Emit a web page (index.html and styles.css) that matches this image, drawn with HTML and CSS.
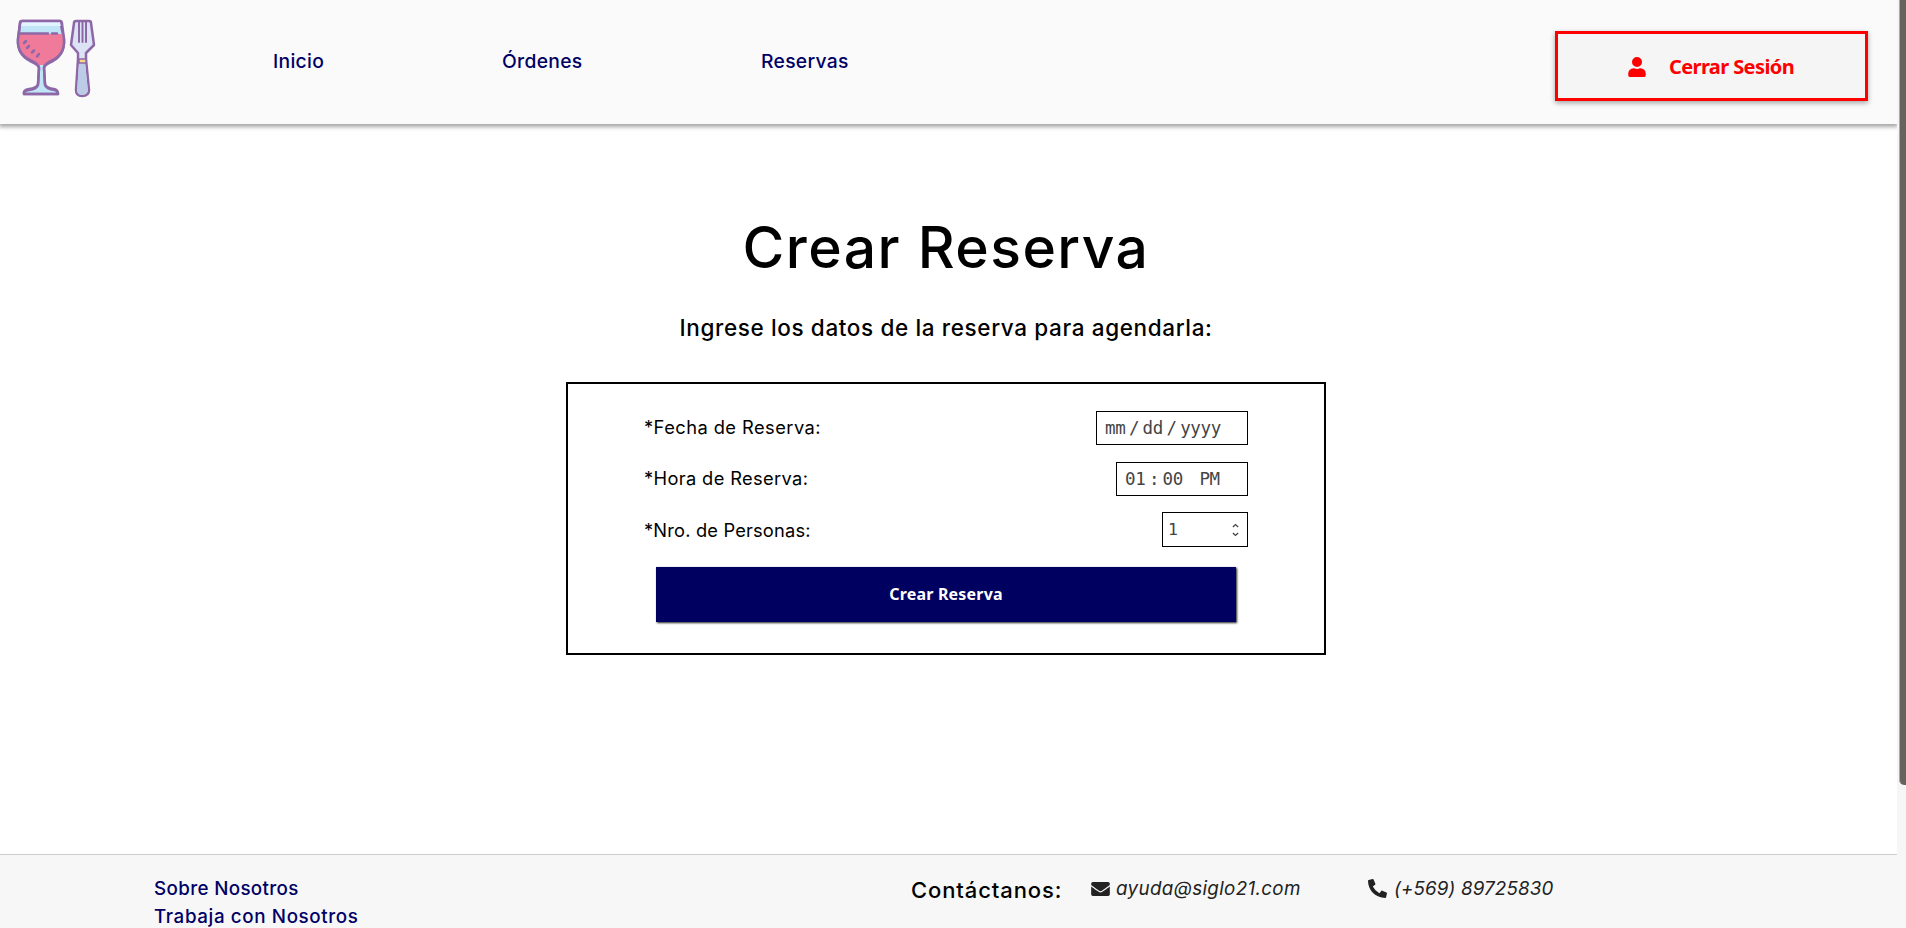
FILE: index.html
```html
<!DOCTYPE html>
<html lang="es">
<head>
<meta charset="utf-8">
<title>Crear Reserva</title>
<link rel="stylesheet" href="styles.css">
</head>
<body>
<div class="page">
  <header class="header">
    <svg class="logo" viewBox="0 0 120 124" fill="none" stroke="#8e68a6" stroke-width="2.5" stroke-linejoin="round" stroke-linecap="round">
      <path d="M22 21H60L64 39Q65 54 53 61Q44 65 44 68L45 85Q46 89 55 90Q58 91 58 94H24Q23 91 29 90Q37 89 38 85L39 68Q39 65 30 61Q17 54 18 39L20 23Q20 21 22 21Z" fill="#bfe5f7"/>
      <path d="M22 22H60L61 26H21Z" fill="#e2f4ff" stroke="none"/>
      <path d="M19 34H63Q66 51 53 60L44 65H39L30 60Q17 53 19 34Z" fill="#f07a9a" stroke="none"/>
      <path d="M22 21H60Q62 21 62 24L64 39Q65 54 53 60Q44 64 44 68L45 84Q46 88 54 89Q58 90 58 94H24Q23 90 29 89Q37 88 38 84L39 68Q39 64 30 60Q17 54 18 39L20 24Q20 21 22 21ZM20 33.500H48M52 33.500H57"/>
      <path d="M24 43L26 41M27 48L29 46M32 52.500L34 50.500M37 56.500L39 54"/>
      <path d="M76 21H89Q91 21 91 23L94 45L86 53V59L89 90Q89 96 82 96Q76 96 76 90L78 59V53L71 45L74 23Q74 21 76 21Z" fill="#dbe3f4"/>
      <path d="M79 63H85L88 91Q86 95 82 95Q78 95 77 91Z" fill="#bccbe6" stroke="none"/>
      <path d="M79 22V42M86 22V42M82.500 22V42" stroke-width="2"/>
      <path d="M79 59H86V63H79Z" fill="#f9d58b" stroke-width="1.500"/>
    </svg>
    <nav class="nav">
      <a class="nav-home">Inicio</a>
      <a class="nav-orders">Órdenes</a>
      <a class="nav-bookings">Reservas</a>
    </nav>
    <button class="logout">
      <svg class="user" viewBox="0 0 448 512" fill="currentColor"><path d="M224 256A128 128 0 1 0 224 0a128 128 0 0 0 0 256zm89.600 32h-16.700a174 174 0 0 1-145.800 0h-16.700A134.400 134.400 0 0 0 0 422.400V464a48 48 0 0 0 48 48h352a48 48 0 0 0 48-48v-41.600A134.400 134.400 0 0 0 313.600 288z"/></svg>
      <span>Cerrar Sesión</span>
    </button>
  </header>
  <main class="main">
    <h1 class="title">Crear Reserva</h1>
    <p class="subtitle">Ingrese los datos de la reserva para agendarla:</p>
    <form class="form">
      <div class="row"><label class="label-date">*Fecha de Reserva:</label>
        <div class="field date"><span>mm</span><span>/</span><span>dd</span><span>/</span><span>yyyy</span></div></div>
      <div class="row"><label class="label-time">*Hora de Reserva:</label>
        <div class="field time"><span>01</span><span>:</span><span>00</span><span class="pm">PM</span></div></div>
      <div class="row last"><label class="label-people">*Nro. de Personas:</label>
        <div class="field number"><span>1</span>
          <svg class="spin" viewBox="0 0 8 16" fill="none" stroke="#444" stroke-width="1.500"><path d="M1 4.500L4 1.800L7 4.500M1 11.500L4 14.200L7 11.500"/></svg></div></div>
      <button class="submit" type="button">Crear Reserva</button>
    </form>
  </main>
  <footer class="footer">
    <div class="links"><a class="link-about">Sobre Nosotros</a><a class="link-jobs">Trabaja con Nosotros</a></div>
    <div class="contact">Contáctanos:</div>
    <address class="mail">
      <svg class="envelope" viewBox="0 0 512 384" fill="currentColor"><path d="M502 127c4-3 10 0 10 5v204a48 48 0 0 1-48 48H48a48 48 0 0 1-48-48V132c0-5 6-8 10-5 22 17 52 40 155 114 21 15 57 48 91 48s71-33 91-48c103-74 133-97 155-114zM256 256c23 0 57-29 74-42 133-96 143-105 173-128 6-5 9-12 9-19V48a48 48 0 0 0-48-48H48A48 48 0 0 0 0 48v19c0 7 3 14 9 19 30 23 40 32 173 128 17 13 51 42 74 42z"/></svg>
      <span>ayuda@siglo21.com</span></address>
    <address class="phone">
      <svg class="handset" viewBox="0 0 512 512" fill="currentColor"><path transform="matrix(-1 0 0 1 512 0)" d="M493 25L389 1c-11-3-23 3-27 14l-48 112c-4 10-1 21 7 28l61 50a371 371 0 0 1-177 177l-50-61c-7-8-18-11-28-7L15 362c-11 4-17 16-14 27l24 104c3 11 12 19 23 19 256 0 464-207 464-464 0-11-8-20-19-23z"/></svg>
      <span>(+569) 89725830</span></address>
  </footer>
</div>
<div class="scrollbar"><div class="thumb"></div></div>
</body>
</html>
```
FILE: styles.css
```css
* { box-sizing: border-box; }
body { margin: 0; height: 928px; overflow: hidden; display: flex; background: #fff; color: #000; font-family: Inter, "Open Sans", sans-serif; }
.page { width: 1897px; height: 928px; display: flex; flex-direction: column; overflow: hidden; white-space: nowrap; }
.header { height: 124px; flex: none; display: flex; align-items: flex-start; background: #fafafa; box-shadow: 0 2px 4px 1px rgba(0,0,0,.35); }
.logo { width: 120px; height: 124px; flex: none; }
.nav { display: flex; flex: 1; padding: 46px 0 0 153px; font-size: 19.300px; line-height: 30px; font-weight: 500; letter-spacing: .300px; color: #000066; }
.nav-home { width: 229px; }
.nav-orders { width: 259px; }
.logout { width: 313px; height: 70px; margin: 31px 29px 0 0; padding: 1px 0 0 70px; display: flex; align-items: center; border: 3px solid #f00; background: #f5f5f5; color: #f00; font: 700 20px/24px "Noto Sans", sans-serif; letter-spacing: -.600px; box-shadow: 0 2px 5px rgba(0,0,0,.35); }
.user { width: 18px; height: 20px; margin-right: 23px; }
.main { height: 730px; flex: none; display: flex; flex-direction: column; align-items: center; padding-top: 84px; padding-right: 5px; }
.title { margin: 0; font-size: 57px; line-height: 80px; font-weight: 500; letter-spacing: 1.450px; }
.subtitle { margin: 25px 0 0; font-size: 22.500px; line-height: 30px; font-weight: 500; letter-spacing: .630px; }
.form { width: 760px; height: 273px; margin-top: 39px; padding: 27px 76px 0; border: 2px solid #000; }
.row { display: flex; justify-content: space-between; align-items: center; height: 34px; margin-bottom: 17px; font-size: 18.300px; line-height: 22px; }
.row label { padding-bottom: 2px; }
.label-date { letter-spacing: .450px; }
.label-time { letter-spacing: .350px; }
.row .label-people { padding: 0; letter-spacing: .170px; }
.row.last { height: 35px; margin: -1px 0 20px; }
.field { display: flex; align-items: center; height: 34px; border: 1px solid #000; color: #444; font: 17.500px/32px "DejaVu Sans Mono", monospace; letter-spacing: -.350px; }
.date { width: 152px; padding-left: 8px; gap: 3.500px; }
.time { width: 132px; padding-left: 8px; gap: 3.500px; }
.pm { margin-left: 13px; }
.number { width: 86px; height: 35px; padding: 0 8px 0 5px; justify-content: space-between; font-size: 16.500px; }
.spin { width: 7px; height: 16px; }
.submit { display: block; width: 580px; height: 55px; margin: 0 auto; padding: 0 0 1px; border: 0; background: #000060; color: #fff; font: 700 16px/24px "Noto Sans", sans-serif; letter-spacing: .200px; box-shadow: 1px 1px 2px 0 #222; }
.footer { height: 74px; flex: none; display: flex; background: #f7f7f7; border-top: 1px solid #ccc; padding: 20px 0 0 154px; font-size: 18.800px; line-height: 28px; }
.links { display: flex; flex-direction: column; width: 757px; color: #000066; font-weight: 500; }
.link-about { letter-spacing: .350px; }
.link-jobs { letter-spacing: .620px; }
.contact { width: 180px; padding-top: 1px; font-size: 22px; font-weight: 500; letter-spacing: .900px; }
.mail, .phone { display: flex; color: #222; height: 28px; align-items: center; }
.mail { width: 277px; letter-spacing: .350px; }
.phone { letter-spacing: .130px; }
.envelope { width: 19px; height: 14px; margin-right: 6px; }
.handset { width: 19px; height: 19px; margin: -2px 7px 0 0; }
.scrollbar { width: 9px; height: 928px; padding-left: 2px; background: #f6f6f6; }
.thumb { height: 785px; background: #66625d; border-left: 1px solid #aaa; border-radius: 0 0 0 5px; }
```
